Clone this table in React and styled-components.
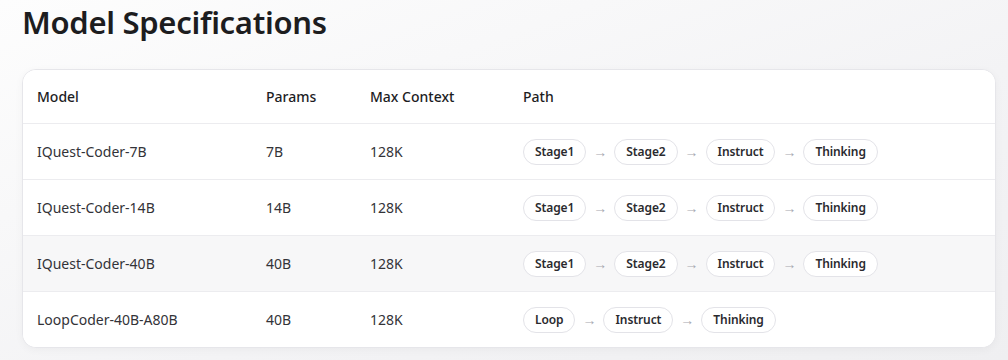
import React from "react";
import styled, { createGlobalStyle } from "styled-components";

const Global = createGlobalStyle`
  html, body { margin: 0; padding: 0; }
  body {
    font-family: "Noto Sans", "Open Sans", sans-serif;
    background: linear-gradient(160deg, #fdfdfd 0%, #f3f3f5 60%, #efeff1 100%);
    min-height: 360px;
    color: #1d1d1f;
  }
`;

const Page = styled.div`
  padding: 0 12px 0 22px;
  height: 360px;
  box-sizing: border-box;
`;

const Title = styled.h1`
  margin: 0;
  padding-top: 2px;
  font-size: 31px;
  line-height: 40px;
  font-weight: 600;
  color: #1d1d1f;
  letter-spacing: -0.3px;
`;

const Card = styled.div`
  margin-top: 27px;
  background: #fff;
  border: 1px solid #e6e6ea;
  border-radius: 14px;
  box-shadow: 0 2px 8px rgba(0, 0, 0, 0.04);
  overflow: hidden;
`;

const Row = styled.div`
  display: grid;
  grid-template-columns: 229px 104px 153px 1fr;
  align-items: center;
  height: ${(p) => (p.$head ? "53px" : "55px")};
  background: ${(p) => (p.$shaded ? "#f7f7f8" : "#fff")};
  border-top: ${(p) => (p.$head ? "none" : "1px solid #ececef")};
`;

const Cell = styled.div`
  padding-left: 14px;
  font-size: 14px;
  font-weight: ${(p) => (p.$head ? 500 : 400)};
  color: ${(p) => (p.$head ? "#1d1d1f" : "#333338")};
`;

const PathWrap = styled.div`
  display: flex;
  align-items: center;
  gap: 7px;
  padding-left: 14px;
`;

const Pill = styled.span`
  display: inline-flex;
  align-items: center;
  height: 24px;
  padding: 0 11px;
  border: 1px solid #e3e3e8;
  border-radius: 13px;
  background: #fff;
  font-size: 12px;
  font-weight: 600;
  letter-spacing: -0.1px;
  color: #2a2a2e;
`;

const Arrow = styled.span`
  font-size: 14px;
  color: #a8a8b0;
`;

const rows = [
  { name: "IQuest-Coder-7B", params: "7B", ctx: "128K", path: ["Stage1", "Stage2", "Instruct", "Thinking"] },
  { name: "IQuest-Coder-14B", params: "14B", ctx: "128K", path: ["Stage1", "Stage2", "Instruct", "Thinking"] },
  { name: "IQuest-Coder-40B", params: "40B", ctx: "128K", path: ["Stage1", "Stage2", "Instruct", "Thinking"], shaded: true },
  { name: "LoopCoder-40B-A80B", params: "40B", ctx: "128K", path: ["Loop", "Instruct", "Thinking"] },
];

export default function App() {
  return (
    <>
      <Global />
      <Page>
        <Title>Model Specifications</Title>
        <Card>
          <Row $head>
            <Cell $head>Model</Cell>
            <Cell $head>Params</Cell>
            <Cell $head>Max Context</Cell>
            <Cell $head>Path</Cell>
          </Row>
          {rows.map((r) => (
            <Row key={r.name} $shaded={r.shaded}>
              <Cell>{r.name}</Cell>
              <Cell>{r.params}</Cell>
              <Cell>{r.ctx}</Cell>
              <PathWrap>
                {r.path.map((s, i) => (
                  <React.Fragment key={s}>
                    {i > 0 && <Arrow>→</Arrow>}
                    <Pill>{s}</Pill>
                  </React.Fragment>
                ))}
              </PathWrap>
            </Row>
          ))}
        </Card>
      </Page>
    </>
  );
}
